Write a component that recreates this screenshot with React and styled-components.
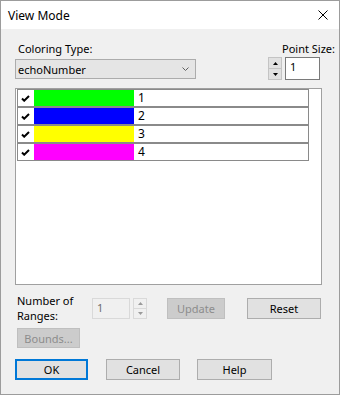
import React from 'react';
import styled, { createGlobalStyle, css } from 'styled-components';

const Global = createGlobalStyle`
  html, body { margin: 0; padding: 0; background: #f0f0f0; }
  body { font-family: "Noto Sans", "Segoe UI", sans-serif; font-size: 11px; color: #000; }
  * { box-sizing: border-box; }
`;

const Window = styled.div`
  width: 340px;
  height: 395px;
  border: 1px solid #9c9c9c;
  background: #f0f0f0;
  display: flex;
  flex-direction: column;
`;

const TitleBar = styled.div`
  height: 28px;
  background: #fff;
  display: flex;
  align-items: center;
  justify-content: space-between;
  padding: 0 11px 0 7px;
  font-size: 12px;
`;

const Body = styled.div`
  padding: 12px 4px 0 14px;
  display: flex;
  flex-direction: column;
`;

const TopRow = styled.div`
  display: flex;
  justify-content: space-between;
`;

const Column = styled.div`
  display: flex;
  flex-direction: column;
  align-items: ${p => (p.$right ? 'flex-end' : 'flex-start')};
`;

const Label = styled.div`
  height: 15px;
  line-height: 15px;
  padding-left: ${p => p.$indent || 0}px;
  white-space: nowrap;
`;

const Combo = styled.div`
  margin-top: 3px;
  width: 181px;
  height: 20px;
  background: #e5e5e5;
  border: 1px solid #acacac;
  display: flex;
  align-items: center;
  justify-content: space-between;
  padding: 0 6px 0 2px;
`;

const SpinRow = styled.div`
  margin-top: 1px;
  margin-right: 15px;
  display: flex;
  gap: 3px;
`;

const Spin = styled.div`
  width: 14px;
  height: ${p => p.$h}px;
  display: flex;
  flex-direction: column;
  margin-left: ${p => p.$ml || 0}px;
`;

const SpinHalf = styled.div`
  flex: 1;
  background: ${p => (p.$disabled ? '#f0f0f0' : '#e1e1e1')};
  border: 1px solid ${p => (p.$disabled ? '#d9d9d9' : '#c4c4c4')};
  display: flex;
  align-items: center;
  justify-content: center;
  & + & { border-top: none; }
`;

const Edit = styled.div`
  width: ${p => p.$w}px;
  height: ${p => p.$h}px;
  background: ${p => (p.$disabled ? '#f0f0f0' : '#fff')};
  border: 1px solid ${p => (p.$disabled ? '#d9d9d9' : '#7a7a7a')};
  color: ${p => (p.$disabled ? '#6d6d6d' : '#000')};
  padding: 1px 0 0 4px;
  line-height: 16px;
`;

const ListBox = styled.div`
  margin-top: 8px;
  margin-right: 13px;
  height: 197px;
  background: #fff;
  border: 1px solid #a0a0a0;
  padding: 0 1px;
  display: flex;
  flex-direction: column;
`;

const Row = styled.div`
  width: 292px;
  height: 18px;
  border: 1px solid #8a8a8a;
  display: flex;
  align-items: stretch;
`;

const CheckCell = styled.div`
  width: 16px;
  background: #fff;
  display: flex;
  align-items: center;
  justify-content: center;
  padding-right: 2px;
`;

const Swatch = styled.div`
  width: 100px;
  background: ${p => p.$color};
`;

const RowText = styled.div`
  padding-left: 4px;
  line-height: 16px;
  font-size: 12px;
`;

const BottomRow = styled.div`
  margin-top: 13px;
  padding-left: 2px;
  display: flex;
  align-items: center;
  height: 21px;
`;

const RangeLabel = styled.div`
  width: 75px;
  line-height: 15px;
  margin-top: -1px;
`;

const Button = styled.div`
  width: ${p => p.$w}px;
  height: ${p => p.$h || 21}px;
  margin-left: ${p => p.$ml || 0}px;
  display: flex;
  align-items: center;
  justify-content: center;
  background: #e1e1e1;
  border: 1px solid #adadad;
  color: #000;
  ${p => p.$disabled && css`
    background: #cccccc;
    border-color: #bfbfbf;
    color: #8c8c8c;
  `}
  ${p => p.$default && css`
    border-color: #0078d7;
    box-shadow: inset 0 0 0 1px #0078d7;
  `}
`;

const BoundsRow = styled.div`
  margin-top: 9px;
  padding-left: 2px;
  display: flex;
`;

const ActionRow = styled.div`
  margin-top: 11px;
  display: flex;
`;

const Check = () => (
  <svg width="9" height="7" viewBox="0 0 9 7">
    <polyline points="1,3.5 3.2,5.7 8,1" fill="none" stroke="#000" strokeWidth="2" />
  </svg>
);

const Arrow = ({ up, color = '#000' }) => (
  <svg width="5" height="3" viewBox="0 0 5 3">
    <polygon points={up ? '0,3 2.5,0 5,3' : '0,0 5,0 2.5,3'} fill={color} />
  </svg>
);

const rows = [
  { color: '#00ff00', label: '1' },
  { color: '#0000ff', label: '2' },
  { color: '#ffff00', label: '3' },
  { color: '#ff00ff', label: '4' },
];

export default function App() {
  return (
    <>
      <Global />
      <Window>
        <TitleBar>
          <span>View Mode</span>
          <svg width="10" height="10" viewBox="0 0 10 10">
            <path d="M0.5 0.5 L9.5 9.5 M9.5 0.5 L0.5 9.5" stroke="#000" strokeWidth="1" />
          </svg>
        </TitleBar>
        <Body>
          <TopRow>
            <Column>
              <Label $indent={3}>Coloring Type:</Label>
              <Combo>
                <span>echoNumber</span>
                <svg width="7" height="4" viewBox="0 0 7 4">
                  <polyline points="0.5,0.5 3.5,3.5 6.5,0.5" fill="none" stroke="#606060" strokeWidth="1" />
                </svg>
              </Combo>
            </Column>
            <Column $right>
              <Label>Point Size:</Label>
              <SpinRow>
                <Spin $h={23}>
                  <SpinHalf><Arrow up /></SpinHalf>
                  <SpinHalf><Arrow /></SpinHalf>
                </Spin>
                <Edit $w={35} $h={23}>1</Edit>
              </SpinRow>
            </Column>
          </TopRow>
          <ListBox>
            {rows.map(r => (
              <Row key={r.label}>
                <CheckCell><Check /></CheckCell>
                <Swatch $color={r.color} />
                <RowText>{r.label}</RowText>
              </Row>
            ))}
          </ListBox>
          <BottomRow>
            <RangeLabel>Number of<br />Ranges:</RangeLabel>
            <Edit $w={38} $h={21} $disabled>1</Edit>
            <Spin $h={21} $ml={3}>
              <SpinHalf $disabled><Arrow up color="#9a9a9a" /></SpinHalf>
              <SpinHalf $disabled><Arrow color="#9a9a9a" /></SpinHalf>
            </Spin>
            <Button $w={58} $ml={20} $disabled>Update</Button>
            <Button $w={74} $ml={22}>Reset</Button>
          </BottomRow>
          <BoundsRow>
            <Button $w={63} $h={20} $disabled>Bounds...</Button>
          </BoundsRow>
          <ActionRow>
            <Button $w={73} $default>OK</Button>
            <Button $w={74} $ml={18}>Cancel</Button>
            <Button $w={75} $ml={17}>Help</Button>
          </ActionRow>
        </Body>
      </Window>
    </>
  );
}
